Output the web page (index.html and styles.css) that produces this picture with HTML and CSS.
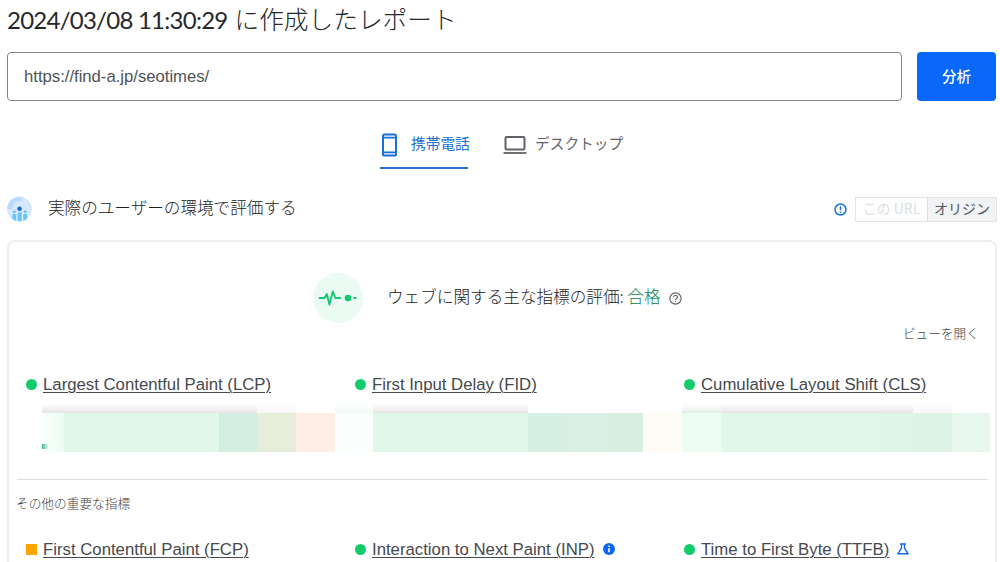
FILE: index.html
```html
<!DOCTYPE html>
<html lang="ja">
<head>
<meta charset="utf-8">
<title>レポート</title>
<link rel="stylesheet" href="styles.css">
</head>
<body>
<main class="page">
  <h1 class="title"><span class="title-date">2024/03/08 11:30:29</span><span class="title-text">に作成したレポート</span></h1>
  <form class="search">
    <div class="url-box"><span class="url-text">https://find-a.jp/seotimes/</span></div>
    <button class="analyze" type="button">分析</button>
  </form>
  <nav class="tabs">
    <a class="tab tab-active">
      <svg class="tab-icon phone" width="18" height="24" viewBox="0 0 18 24" fill="none" stroke="currentColor"><rect x="3" y="1.5" width="13" height="21" rx="1.6" stroke-width="2"/><path d="M3 4.6h13M3 19.4h13" stroke-width="1.8"/></svg>
      <span class="tab-label">携帯電話</span>
    </a>
    <a class="tab">
      <svg class="tab-icon" width="24" height="18" viewBox="0 0 24 18" fill="none" stroke="currentColor"><rect x="2.5" y="1" width="19" height="12.5" rx="1.2" stroke-width="2"/><path d="M.5 17h23" stroke-width="1.8"/></svg>
      <span class="tab-label">デスクトップ</span>
    </a>
  </nav>
  <div class="section-head">
    <svg class="users-icon" width="26" height="26" viewBox="0 0 26 26"><defs><clipPath id="disc"><circle cx="12.5" cy="13" r="12.3"/></clipPath></defs><g clip-path="url(#disc)"><path fill="#d6e8fd" d="M0 0h26v26H0z"/><path fill="#b9d9fc" d="M0 0h17l-3 5-6 1-3 7H0z"/><path fill="#e9f5ff" d="M5 17h16v9H5z"/><g fill="#6cc4fa"><rect x="5.3" y="18" width="4" height="8"/><rect x="10.5" y="16.5" width="4.3" height="10"/><rect x="16.2" y="18" width="4" height="8"/><circle cx="7.3" cy="15.8" r="1.6"/><circle cx="18.2" cy="15.8" r="1.6"/></g><circle cx="12.6" cy="12.7" r="2.3" fill="#1967d2"/></g></svg>
    <h2 class="section-title">実際のユーザーの環境で評価する</h2>
    <svg class="alert-icon" width="13" height="13" viewBox="0 0 13 13" fill="none" stroke="#1a73d8" stroke-width="1.5"><circle cx="6.5" cy="6.5" r="5.5"/><path d="M6.5 3.2v4M6.5 8.4v1.5"/></svg>
    <div class="toggle"><span class="toggle-url">この URL</span><span class="toggle-origin">オリジン</span></div>
  </div>
  <section class="card">
    <div class="verdict">
      <svg class="pulse" width="50" height="50" viewBox="0 0 50 50"><circle cx="25" cy="25" r="25" fill="#ebfbf3"/><path d="M6.5 25h5l2.3-4 2.6 10.5 3.4-13 2.5 6.5h5" fill="none" stroke="#12c970" stroke-width="1.9" stroke-linejoin="round" stroke-linecap="round"/><circle cx="35" cy="25" r="3.3" fill="#12c970"/><path d="M40.5 25h3" stroke="#12c970" stroke-width="2"/></svg>
      <p class="verdict-text">ウェブに関する主な指標の評価: <span class="pass">合格</span></p>
      <svg class="help" width="13" height="13" viewBox="0 0 13 13" fill="none" stroke="#666" stroke-width="1.2"><circle cx="6.5" cy="6.5" r="5.6"/><path d="M4.6 5.2c0-2.6 3.8-2.5 3.8-.2 0 1.4-1.9 1.5-1.9 3M6.5 8.9v1.2"/></svg>
    </div>
    <a class="expand">ビューを開く</a>
    <div class="metrics">
      <div class="metric"><i class="dot"></i><a class="name">Largest Contentful Paint (LCP)</a></div>
      <div class="metric"><i class="dot"></i><a class="name">First Input Delay (FID)</a></div>
      <div class="metric"><i class="dot"></i><a class="name">Cumulative Layout Shift (CLS)</a></div>
    </div>
    <div class="mosaic">
      <div class="mosaic-top"><i class="shade"></i><i class="faint"></i><i></i><i class="mint"></i><i class="shade"></i><i></i><i class="shade green-edge"></i><i class="shade"></i><i class="faint"></i></div>
      <div class="mosaic-main"><i class="c1"></i><i class="c2"></i><i class="c3"></i><i class="c4"></i><i class="c5"></i><i class="c6"></i><i class="c2"></i><i class="c7"></i><i class="c8"></i><i class="c9"></i><i class="c10"></i><i class="c11"></i><i class="c2"></i><i class="c12"></i><i class="c13"></i><i class="c14"></i></div>
    </div>
    <hr class="rule">
    <p class="other">その他の重要な指標</p>
    <div class="metrics metrics-other">
      <div class="metric"><i class="square"></i><a class="name">First Contentful Paint (FCP)</a></div>
      <div class="metric"><i class="dot"></i><a class="name">Interaction to Next Paint (INP)</a>
        <svg class="badge" width="12" height="12" viewBox="0 0 12 12"><circle cx="6" cy="6" r="6" fill="#0b66f5"/><path d="M6 2.5v1.6M6 5.2v4" stroke="#fff" stroke-width="1.6"/></svg></div>
      <div class="metric"><i class="dot"></i><a class="name">Time to First Byte (TTFB)</a>
        <svg class="badge" width="12" height="12" viewBox="0 0 12 12" fill="none" stroke="#1967e8" stroke-width="1.4"><path d="M3 1h6M4.5 1v4L1 10.8h10L7.5 5V1"/></svg></div>
    </div>
  </section>
</main>
</body>
</html>
```
FILE: styles.css
```css
* { box-sizing: border-box; }
body { margin: 0; background: #fff; color: #3c4043; font-family: "Liberation Sans", "Noto Sans CJK JP", sans-serif; overflow: hidden; }
h1, h2, p { margin: 0; font-weight: 400; }
.page { height: 562px; overflow: hidden; padding: 0 3px 0 7px; }

.title { display: flex; align-items: center; gap: 7px; height: 40px; white-space: nowrap; color: #26282b; }
.title-date { font: 400 24px/40px Lato, sans-serif; letter-spacing: -.75px; }
.title-text { font: 300 24.7px/38px "Noto Sans CJK JP", sans-serif; padding-bottom: 4px; }

.search { display: flex; gap: 15px; margin: 12px 1px 0 0; }
.url-box { flex: 1; height: 49px; border: 1px solid #858585; border-radius: 4px; padding: 0 16px; display: flex; align-items: center; }
.url-text { font-size: 16.7px; color: #505357; letter-spacing: -.01px; }
.analyze { width: 79px; height: 49px; border: 0; border-radius: 4px; background: #0868fa; color: #fff; font: 500 14.5px "Noto Sans CJK JP", sans-serif; padding: 0 0 3px; }

.tabs { display: flex; gap: 35px; margin: 20px 0 0 373px; height: 48px; }
.tab { display: flex; align-items: center; height: 48px; font: 400 14.7px/24px "Noto Sans CJK JP", sans-serif; color: #5f6368; white-space: nowrap; }
.tab-active { color: #1a6fd4; border-bottom: 2px solid #2573d5; width: 88px; padding-top: 2px; }
.tab-icon { flex: none; margin-right: 8px; }
.phone { margin-right: 13px; }
.tab-label { padding-bottom: 4px; }

.section-head { display: flex; align-items: center; height: 26px; margin-top: 27px; }
.users-icon { margin-right: 15px; }
.section-title { flex: 1; font: 300 16.6px/24px "Noto Sans CJK JP", sans-serif; color: #222; white-space: nowrap; padding-bottom: 4px; }
.toggle { display: flex; width: 142px; height: 25px; margin-left: 8px; border: 1px solid #e3e5e7; font: 400 14px/20px "Noto Sans CJK JP", sans-serif; text-align: center; white-space: nowrap; }
.toggle-url { width: 71px; color: #dcdee0; }
.toggle-origin { flex: 1; background: #f1f3f4; border-left: 1px solid #dadce0; color: #50555a; }

.card { height: 400px; margin: 18px 0 0; border: 2px solid #eee; border-radius: 8px; }
.verdict { display: flex; align-items: center; height: 50px; margin: 31px 0 0 304px; }
.verdict-text { margin-left: 24px; font: 300 16.62px/26px "Noto Sans CJK JP", sans-serif; color: #222; white-space: nowrap; padding-bottom: 4px; }
.pass { color: #0d8050; }
.help { margin: 1px 0 0 8px; }
.expand { display: block; text-align: right; padding-right: 16px; font: 300 12.7px/20px "Noto Sans CJK JP", sans-serif; color: #444; }
.metrics { display: grid; grid-template-columns: 329px 329px 1fr; margin: 30px 0 0 17px; }
.metric { display: flex; align-items: center; height: 22px; white-space: nowrap; }
.dot, .square { flex: none; width: 11px; height: 11px; margin-right: 6px; background: #12cc6c; border-radius: 50%; }
.square { background: #ffa400; border-radius: 0; }
.name { font-size: 16.75px; line-height: 22px; color: #46494d; text-decoration: underline; text-decoration-thickness: 1px; text-underline-offset: 2px; padding-top: 2px; }
.badge { margin-left: 8px; }

.mosaic { margin: 8px 5px 0 33px; }
.mosaic-top { display: grid; height: 10px; grid-template-columns: 215px 39px 39px 38px 155px 154px 39px 192px 39px; }
.mosaic-main { display: grid; height: 39px; grid-template-columns: 22px 155px 38px 39px 39px 38px 155px 39px 40px 36px 39px 39px 159px 33px 39px 38px; }
.shade { background: linear-gradient(#fff, #f6f2f4 55%, #e7e4e5); }
.green-edge { background: linear-gradient(#fff, #f4f8f5 55%, #e2eee7); }
.faint { background: linear-gradient(#fff, #f8f6f7); }
.mint { background: linear-gradient(#fff, #f0fbf5); }
.c1 { background: linear-gradient(90deg, #3fc08e, #fff0) 0 31px / 7px 5px no-repeat, linear-gradient(90deg, #fafffc, #ecfcf3); }
.c2 { background: #e1f7ea; }
.c3 { background: #d2eee0; }
.c4 { background: #e6eddb; }
.c5 { background: #feeee6; }
.c6 { background: #fafffe; }
.c7 { background: #d6f0e3; }
.c8 { background: #daf0e4; }
.c9 { background: #d8eee0; }
.c10 { background: #fffbf5; }
.c11 { background: #edfdf4; }
.c12 { background: #def6e8; }
.c13 { background: #dcf3e6; }
.c14 { background: #e8f7ed; }

.rule { border: 0; border-top: 1px solid #dcdcdc; margin: 27px 7px 0 8px; }
.other { margin: 13px 0 0 7px; font: 300 12.7px/20px "Noto Sans CJK JP", sans-serif; color: #444; }
.metrics-other { margin-top: 25px; }
```
